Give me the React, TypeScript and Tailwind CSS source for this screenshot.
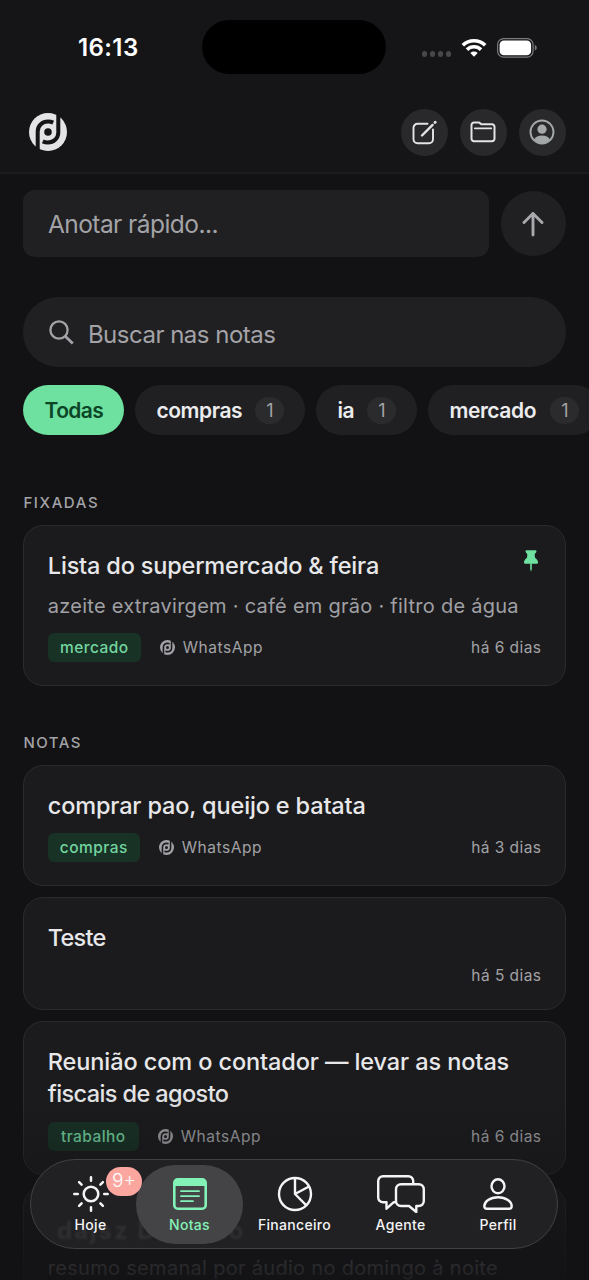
import type { ReactNode } from "react";

interface TitleLine {
  text: string;
  tracking: string;
}

interface Note {
  id: string;
  lines: TitleLine[];
  body?: string;
  tag?: string;
  tagWidth?: string;
  age: string;
  pinned?: boolean;
  box: string;
}

const filters = [
  { label: "compras", width: "w-[170px]" },
  { label: "ia", width: "w-[101px]" },
  { label: "mercado", width: "w-[172px]" },
];

const pinned: Note[] = [
  {
    id: "lista",
    lines: [{ text: "Lista do supermercado & feira", tracking: "tracking-[-0.180px]" }],
    body: "azeite extravirgem · café em grão · filtro de água",
    tag: "mercado",
    tagWidth: "w-[93px]",
    age: "há 6 dias",
    pinned: true,
    box: "h-[161px] pb-[23px]",
  },
];

const notes: Note[] = [
  {
    id: "comprar",
    lines: [{ text: "comprar pao, queijo e batata", tracking: "tracking-[-0.150px]" }],
    tag: "compras",
    tagWidth: "w-[92px]",
    age: "há 3 dias",
    box: "h-[121px] pb-[23px]",
  },
  {
    id: "teste",
    lines: [{ text: "Teste", tracking: "tracking-[-0.750px]" }],
    age: "há 5 dias",
    box: "h-[113px] pb-[19px]",
  },
  {
    id: "reuniao",
    lines: [
      { text: "Reunião com o contador — levar as notas", tracking: "tracking-[-0.100px]" },
      { text: "fiscais de agosto", tracking: "tracking-[-0.600px]" },
    ],
    tag: "trabalho",
    tagWidth: "w-[91px]",
    age: "há 6 dias",
    box: "h-[154px] pb-[23px]",
  },
];

function Logo({ className }: { className: string }) {
  return (
    <svg viewBox="0 0 38 38" className={className} fill="none">
      <circle cx="19" cy="19" r="19" fill="currentColor" />
      <g stroke="var(--cut)" strokeWidth="4">
        <path d="M8.700 36V18.500C8.700 12.300 13.500 8.500 19 8.500c2 0 3.800.4 5.200 1.100" />
        <path d="M29.300 2v17.500c0 6.200-4.800 10-10.300 10-2 0-3.800-.4-5.200-1.100" />
      </g>
      <circle cx="19" cy="19" r="3.800" fill="var(--cut)" />
    </svg>
  );
}

function StatusBar() {
  return (
    <div className="relative flex h-[96px] items-center justify-between pr-[52px] pl-[78px]">
      <span className="text-[24px] font-semibold tracking-[0.400px] text-white">16:13</span>
      <div className="absolute top-[20px] left-[202px] h-[54px] w-[184px] rounded-full bg-black" />
      <div className="flex items-center">
        <div className="mt-[12px] mr-[10px] flex gap-[2.500px]">
          {[0, 1, 2, 3].map((dot) => (
            <span key={dot} className="size-[5.500px] rounded-full bg-[#48484a]" />
          ))}
        </div>
        <svg viewBox="0 0 26 20" className="mr-[10px] h-[20px] w-[26px]" fill="none" stroke="#fff" strokeWidth="3.600">
          <path d="M1.800 7.300a16 16 0 0 1 22.400 0" />
          <path d="M6 11.600a10 10 0 0 1 14 0" />
          <path d="M9.300 14.900a5.400 5.400 0 0 1 7.400 0L13 18.700z" fill="#fff" stroke="none" />
        </svg>
        <svg viewBox="0 0 40 20" className="h-[20px] w-[40px]" fill="none">
          <rect x="0.600" y="0.600" width="35.500" height="18.500" rx="6" stroke="#7b7b7d" strokeWidth="1.200" />
          <rect x="2.600" y="2.500" width="31.500" height="14.700" rx="4.300" fill="#fff" />
          <path d="M37.800 7v5.500c1.200-.4 1.900-1.500 1.900-2.750S39 7.400 37.800 7z" fill="#7b7b7d" />
        </svg>
      </div>
    </div>
  );
}

function RoundButton({ children }: { children: ReactNode }) {
  return (
    <button className="flex size-[47px] items-center justify-center rounded-full bg-[#29292b] text-[#e4e4e6]">
      {children}
    </button>
  );
}

function Header() {
  return (
    <header className="h-[174px] border-b-2 border-[#1b1b1d] bg-[#151517]">
      <StatusBar />
      <div className="flex h-[72px] items-center justify-between pr-[23.500px] pl-[29px]">
        <Logo className="size-[38px] text-[#e4e4e6] [--cut:#151517]" />
        <div className="flex gap-[12px]">
          <RoundButton>
            <svg viewBox="0 0 26 26" className="size-[26px]" fill="none" stroke="currentColor" strokeWidth="1.900" strokeLinecap="round">
              <path d="M16.500 4.800H6.500a4 4 0 0 0-4 4v11.500a4 4 0 0 0 4 4H18a4 4 0 0 0 4-4V10.500" />
              <path d="M11 16.500L21.600 5.900" strokeWidth="2.400" />
              <path d="M24 3.500l.2-.2" strokeWidth="2.800" />
            </svg>
          </RoundButton>
          <RoundButton>
            <svg viewBox="0 0 26 22" className="h-[22px] w-[26px]" fill="none" stroke="currentColor" strokeWidth="2" strokeLinejoin="round">
              <path d="M1.500 4a2.500 2.500 0 0 1 2.500-2.500h4.200c1 0 1.600.3 2.200 1l.6.700H22A2.500 2.500 0 0 1 24.500 5.700v12A2.500 2.500 0 0 1 22 20.200H4a2.500 2.500 0 0 1-2.500-2.500z" />
              <path d="M4.800 7.300h16.500" strokeWidth="1.700" strokeLinecap="round" />
            </svg>
          </RoundButton>
          <RoundButton>
            <svg viewBox="0 0 26 26" className="size-[26px] text-[#a5a8a8]" fill="none">
              <circle cx="13" cy="13" r="11.500" stroke="currentColor" strokeWidth="1.900" />
              <circle cx="13" cy="10.200" r="4.600" fill="currentColor" />
              <path d="M5 20.600c1.400-2.700 4.400-4 8-4s6.600 1.300 8 4a10.900 10.900 0 0 1-16 0z" fill="currentColor" />
            </svg>
          </RoundButton>
        </div>
      </div>
    </header>
  );
}

function NoteCard({ note }: { note: Note }) {
  return (
    <article
      className={`flex flex-col rounded-[20px] border border-[#2b2b2d] bg-[#1b1b1d] pt-[24px] pr-[23px] pl-[23.400px] ${note.box}`}
    >
      <div className="flex justify-between">
        <h3 className="text-[23.500px] leading-[32px] font-[550] text-[#e8e8ea]">
          {note.lines.map((line) => (
            <span key={line.text} className={`block whitespace-nowrap ${line.tracking}`}>
              {line.text}
            </span>
          ))}
        </h3>
        {note.pinned && (
          <svg viewBox="0 0 14 22" className="mr-[4px] h-[22px] w-[14px] shrink-0" fill="#6ee09f">
            <path d="M1.500 1.500C1.500.6 2 .3 2.700.3h8.600c.7 0 1.200.3 1.200 1.200 0 1.100-1.800 1.800-1.800 2.900l.3 3.300c1.700 1 3 2.800 3 4.600 0 1-.5 1.500-1.400 1.500H7.800v5.300L7 21.800l-.8-2.700v-5.300H1.400C.5 13.800 0 13.300 0 12.300c0-1.800 1.300-3.600 3-4.600l.3-3.300c0-1.100-1.800-1.800-1.800-2.900z" />
          </svg>
        )}
      </div>
      {note.body && (
        <p className="mt-[10px] text-[20px] leading-[28px] tracking-[0.260px] whitespace-nowrap text-[#a0a0a4]">
          {note.body}
        </p>
      )}
      <div className="mt-auto flex h-[29px] items-center text-[15.500px] tracking-[0.450px] text-[#a2a2a6]">
        {note.tag && (
          <>
            <span
              className={`flex h-[29px] shrink-0 items-center justify-center rounded-[6px] bg-[#183226] font-medium text-[#73d5a0] ${note.tagWidth}`}
            >
              {note.tag}
            </span>
            <Logo className="mr-[8px] ml-[19px] size-[15px] [--cut:#1b1b1d]" />
            <span className="tracking-[0.550px]">WhatsApp</span>
          </>
        )}
        <span className="ml-auto">{note.age}</span>
      </div>
    </article>
  );
}

function NavItem({
  label,
  width,
  active,
  children,
}: {
  label: string;
  width: string;
  active?: boolean;
  children: ReactNode;
}) {
  return (
    <button
      className={`relative flex h-[79px] shrink-0 flex-col items-center rounded-full pt-[9px] ${width} ${
        active ? "bg-[#444446] text-[#83f2b6]" : "text-[#f4f4f6]"
      }`}
    >
      <span className="flex h-[40px] items-center justify-center">{children}</span>
      <span className="text-[14px] leading-[22px] font-[550] tracking-[0.320px]">{label}</span>
    </button>
  );
}

function TabBar() {
  return (
    <nav className="absolute top-[1159px] left-[30px] flex h-[90px] w-[528px] items-center rounded-full border border-[#414143] bg-[#212123] pl-[14px]">
      <span
        aria-hidden
        className="absolute top-[54px] left-[26px] text-[24px] leading-[34px] font-bold tracking-[2px] text-[#303032] blur-[1px]"
      >
        dajsz Dasz no
      </span>
      <NavItem label="Hoje" width="w-[91px]">
        <svg viewBox="0 0 36 36" className="size-[36px]" fill="none" stroke="currentColor" strokeWidth="2.500" strokeLinecap="round">
          <circle cx="18" cy="18" r="7.300" />
          <path d="M18 1.300v3.500M18 31.200v3.500M1.300 18h3.500M31.200 18h3.500M6.100 6.100l2.500 2.500M27.400 27.400l2.500 2.500M6.100 29.900l2.500-2.500M27.400 8.600l2.500-2.500" />
        </svg>
      </NavItem>
      <NavItem label="Notas" width="w-[107px]" active>
        <svg viewBox="0 0 34 32" className="h-[32px] w-[34px]" fill="none" stroke="currentColor" strokeWidth="2.600" strokeLinecap="round">
          <rect x="1.300" y="1.300" width="31.400" height="29.400" rx="3.500" />
          <path d="M1.500 3.800a2.600 2.600 0 0 1 2.600-2.600h25.800a2.600 2.600 0 0 1 2.600 2.600v4.200h-31z" fill="currentColor" stroke="none" />
          <path d="M8 13.200h18M8 18.200h18M8 23.200h12" strokeWidth="1.800" />
        </svg>
      </NavItem>
      <NavItem label="Financeiro" width="w-[103px]">
        <svg viewBox="0 0 36 36" className="size-[36px]" fill="none" stroke="currentColor" strokeWidth="2.400" strokeLinejoin="round">
          <circle cx="18" cy="18" r="16" />
          <path d="M18 2v16l11.300 11.300M18 18l14-7.500" />
        </svg>
      </NavItem>
      <NavItem label="Agente" width="w-[109px]">
        <svg viewBox="0 0 48 38" className="h-[38px] w-[48px]" fill="none" stroke="currentColor" strokeWidth="2.400" strokeLinejoin="round">
          <path d="M36.200 8.800V6a4.800 4.800 0 0 0-4.800-4.800H6a4.800 4.800 0 0 0-4.800 4.800v16.500A4.800 4.800 0 0 0 6 27.300h3.500v6.400l7-6.400h2.500" />
          <path d="M24 9.200h17.800a5 5 0 0 1 5 5V26a5 5 0 0 1-5 5h-2.500v6L32 31h-8a5 5 0 0 1-5-5V14.200a5 5 0 0 1 5-5z" />
        </svg>
      </NavItem>
      <NavItem label="Perfil" width="w-[86px]">
        <svg viewBox="0 0 30 32" className="h-[32px] w-[30px]" fill="none" stroke="currentColor" strokeWidth="2.400" strokeLinejoin="round">
          <ellipse cx="15" cy="8.300" rx="6.500" ry="7" />
          <path d="M4 30.700h22c1.800 0 2.700-.9 2.700-2.500 0-4.500-5.500-9-13.700-9s-13.700 4.500-13.700 9c0 1.600.9 2.500 2.700 2.500z" />
        </svg>
      </NavItem>
      <span className="absolute top-[7px] left-[75px] flex h-[29px] w-[36px] items-center justify-center rounded-full bg-[#fba69f] text-[19px] font-light text-white">
        9+
      </span>
    </nav>
  );
}

export default function App() {
  return (
    <div className="relative h-[1280px] w-[589px] overflow-hidden bg-[#121214] font-['Inter',sans-serif]">
      <Header />
      <main className="pt-[16px] pr-[23px] pl-[23.400px]">
        <div className="flex items-center justify-between pr-[0.500px]">
          <div className="flex h-[67px] w-[466px] items-center rounded-[12px] bg-[#202022] pt-px pl-[24.500px] text-[24.500px] tracking-[-0.550px] text-[#a3a3a7]">
            Anotar rápido...
          </div>
          <button className="flex size-[65px] items-center justify-center rounded-full bg-[#202022]">
            <svg viewBox="0 0 22 26" className="h-[26px] w-[22px]" fill="none" stroke="#a9a9ad" strokeWidth="2.900" strokeLinecap="round" strokeLinejoin="round">
              <path d="M11 24V2.500M2 11.500l9-9 9 9" />
            </svg>
          </button>
        </div>
        <div className="mt-[40px] mr-[0.500px] flex h-[70px] items-center gap-[14px] rounded-full bg-[#202022] pl-[25.500px] text-[24px] tracking-[-0.500px] text-[#a3a3a7]">
          <svg viewBox="0 0 25 25" className="size-[25px]" fill="none" stroke="currentColor" strokeWidth="2.300">
            <circle cx="10" cy="10" r="8.600" />
            <path d="M16.200 16.200l7.600 7.400" strokeWidth="2.800" />
          </svg>
          <span className="pt-[5px]">Buscar nas notas</span>
        </div>
        <div className="mt-[18px] flex gap-[11px] text-[21px] font-semibold tracking-[-0.420px]">
          <button className="h-[50px] w-[101px] shrink-0 rounded-full bg-[#6ee09f] pt-px tracking-[-0.600px] text-[#0b4627]">
            Todas
          </button>
          {filters.map((filter) => (
            <button
              key={filter.label}
              className={`flex h-[50px] shrink-0 items-center justify-between rounded-full bg-[#202022] px-[21px] text-[#ececee] ${filter.width}`}
            >
              <span className="pt-px">{filter.label}</span>
              <span className="flex h-[27px] w-[29px] items-center justify-center rounded-full bg-[#2b2b2d] pt-px text-[18px] font-normal tracking-normal text-[#a3a3a7]">
                1
              </span>
            </button>
          ))}
        </div>
        <h2 className="mt-[56px] text-[15px] leading-[24px] font-medium tracking-[1.600px] text-[#a3a3a7]">FIXADAS</h2>
        <div className="mt-[10px] mr-[0.500px]">
          {pinned.map((note) => (
            <NoteCard key={note.id} note={note} />
          ))}
        </div>
        <h2 className="mt-[45px] text-[15px] leading-[24px] font-medium tracking-[1.500px] text-[#a3a3a7]">NOTAS</h2>
        <div className="mt-[10px] mr-[0.500px] flex flex-col gap-[11px]">
          {notes.map((note) => (
            <NoteCard key={note.id} note={note} />
          ))}
          <article className="h-[154px] rounded-[20px] border border-[#2b2b2d] bg-[#1b1b1d] px-[23.400px] pt-[67px]">
            <p className="text-[20px] leading-[28px] tracking-[0.300px] whitespace-nowrap text-[#a0a0a4]">
              resumo semanal por áudio no domingo à noite
            </p>
          </article>
        </div>
      </main>
      <div className="absolute inset-x-0 bottom-0 h-[190px] bg-linear-to-b from-[#121214]/0 via-[#121214]/30 via-35% to-[#121214]/90" />
      <TabBar />
    </div>
  );
}
